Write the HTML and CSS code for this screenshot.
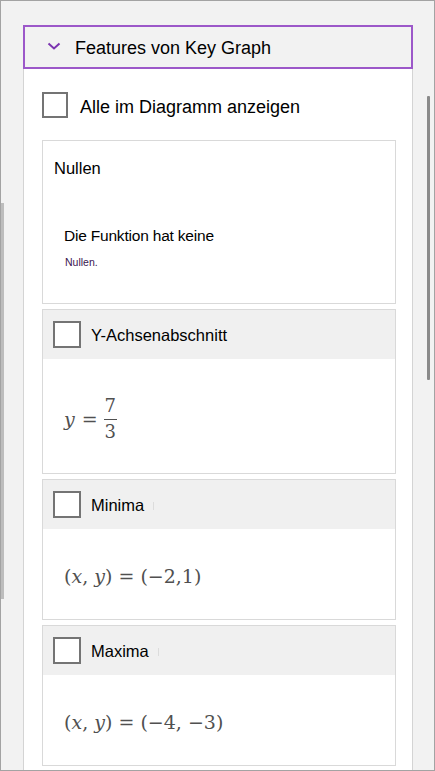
FILE: index.html
```html
<!DOCTYPE html>
<html lang="de">
<head>
<meta charset="utf-8">
<title>Features von Key Graph</title>
<link rel="stylesheet" href="styles.css">
</head>
<body>
<div class="window">
  <div class="gutter-left"><div class="left-bar"></div></div>
  <div class="pane">
    <div class="pane-header">
      <svg class="chevron" width="14" height="8" viewBox="0 0 14 8"><polyline points="1.5,1.5 7,6.5 12.5,1.5" fill="none" stroke="#7b34b0" stroke-width="2"/></svg>
      <span class="pane-title">Features von Key Graph</span>
    </div>
    <div class="panel">
      <div class="show-all"><span class="checkbox"></span><span class="show-all-label">Alle im Diagramm anzeigen</span></div>

      <div class="card card-zero">
        <div class="zero-title">Nullen</div>
        <div class="zero-text">Die Funktion hat keine</div>
        <div class="zero-small">Nullen.</div>
      </div>

      <div class="card">
        <div class="card-head"><span class="checkbox small"></span><span class="card-label">Y-Achsenabschnitt</span></div>
        <div class="card-body tall">
          <span class="math"><i>y</i><span class="eq">=</span><span class="frac"><span>7</span><span class="bar"></span><span>3</span></span></span>
        </div>
      </div>

      <div class="card">
        <div class="card-head"><span class="checkbox small"></span><span class="card-label">Minima</span><span class="caret"></span></div>
        <div class="card-body">
          <span class="math">(<i>x</i>, <i>y</i>) = (−2,1)</span>
        </div>
      </div>

      <div class="card">
        <div class="card-head"><span class="checkbox small"></span><span class="card-label">Maxima</span><span class="caret"></span></div>
        <div class="card-body">
          <span class="math">(<i>x</i>, <i>y</i>) = (−4, −3)</span>
        </div>
      </div>
    </div>
  </div>
  <div class="gutter-right"><div class="thumb"></div></div>
</div>
</body>
</html>
```

FILE: styles.css
```css
html, body {
  margin: 0;
  padding: 0;
  width: 435px;
  height: 771px;
  overflow: hidden;
  background: #f2f2f2;
}

.window {
  box-sizing: border-box;
  width: 435px;
  height: 771px;
  border: 1px solid #a3a3a3;
  background: #f2f2f2;
  display: flex;
  overflow: hidden;
  font-family: "Liberation Sans", Arial, sans-serif;
  color: #000;
}

.gutter-left {
  width: 22px;
  flex: none;
}

.left-bar {
  margin-top: 202px;
  width: 3px;
  height: 396px;
  background: #bdbdbd;
}

.pane {
  width: 390px;
  flex: none;
  padding-top: 24px;
  display: flex;
  flex-direction: column;
}

.pane-header {
  box-sizing: border-box;
  height: 44px;
  flex: none;
  border: 2px solid #9c58c9;
  background: #f2f2f2;
  display: flex;
  align-items: center;
  padding-left: 22px;
}

.chevron {
  flex: none;
  margin-right: 14px;
  margin-top: -2px;
}

.pane-title {
  font-size: 18px;
  padding-top: 3px;
}

.panel {
  flex: 1;
  background: #fff;
  border-left: 1px solid #d4d4d4;
  border-right: 1px solid #d4d4d4;
  padding: 23px 16px 0 18px;
}

.show-all {
  display: flex;
  align-items: center;
  gap: 12px;
  height: 26px;
  font-size: 18px;
}

.show-all-label {
  padding-top: 4px;
}

.checkbox {
  box-sizing: border-box;
  width: 26px;
  height: 26px;
  border: 2px solid #747474;
  background: #fff;
  flex: none;
}

.checkbox.small {
  width: 28px;
  height: 27px;
}

.card {
  box-sizing: border-box;
  border: 1px solid #d9d9d9;
  background: #fff;
  margin-top: 5px;
}

.card-zero {
  margin-top: 22px;
  height: 164px;
  padding: 17px 0 0 11px;
}

.zero-title {
  font-size: 16.5px;
  line-height: 20px;
}

.zero-text {
  margin-top: 48px;
  padding-left: 10px;
  font-size: 15.5px;
  line-height: 20px;
  letter-spacing: -0.2px;
}

.zero-small {
  margin-top: 9px;
  padding-left: 11px;
  font-size: 10.5px;
  line-height: 14px;
  color: #3a1550;
}

.card-head {
  height: 49px;
  background: #f0f0f0;
  display: flex;
  align-items: center;
  padding-left: 10px;
  gap: 10px;
}

.card-label {
  font-size: 16.5px;
  padding-top: 2px;
}

.caret {
  width: 1px;
  height: 8px;
  background: #dcdcdc;
  margin-left: -1px;
  margin-top: 2px;
}

.card-body {
  box-sizing: border-box;
  height: 90px;
  display: flex;
  align-items: center;
  padding-left: 21px;
  padding-top: 4px;
}

.card-body.tall {
  height: 114px;
  padding-top: 6px;
}

.math {
  font-family: "DejaVu Serif", "Liberation Serif", serif;
  font-size: 19px;
  color: #505050;
  white-space: pre;
  display: inline-flex;
  align-items: center;
}

.math i {
  font-style: italic;
}

.eq {
  margin: 0 6px 0 7px;
}

.frac {
  display: inline-flex;
  flex-direction: column;
  align-items: center;
  font-size: 18px;
  line-height: 18px;
}

.frac .bar {
  width: 13px;
  height: 1.5px;
  background: #505050;
  margin: 4px 0 3px;
}

.gutter-right {
  flex: 1;
}

.thumb {
  margin-top: 95px;
  margin-left: 14px;
  width: 3px;
  height: 284px;
  background: #8a8a8a;
  border-radius: 1px;
}
```
